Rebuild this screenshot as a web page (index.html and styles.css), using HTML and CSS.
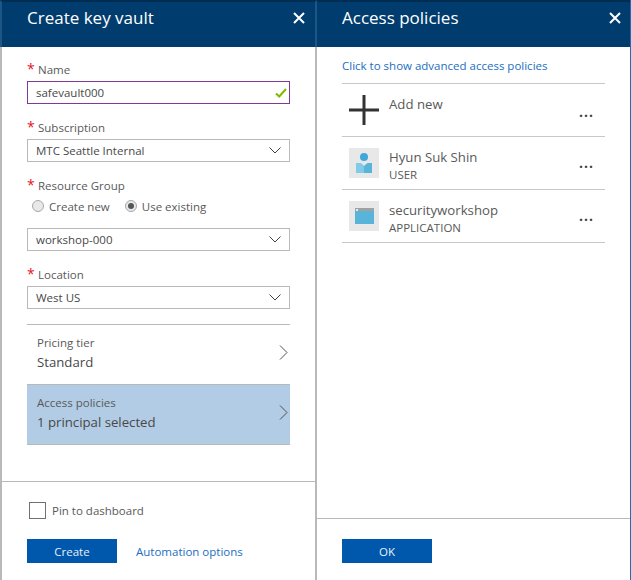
FILE: index.html
```html
<!DOCTYPE html>
<html lang="en">
<head>
    <meta charset="UTF-8">
    <meta name="viewport" content="width=device-width, initial-scale=1.0">
    <title>Create key vault</title>
    <link rel="stylesheet" href="styles.css">
</head>
<body>
    <div class="blades">
        <section class="blade blade-left">
            <header class="blade-header">
                <h2>Create key vault</h2>
                <svg class="close" width="12" height="12" viewBox="0 0 12 12"><path d="M1 1L11 11M11 1L1 11"/></svg>
            </header>
            <div class="blade-body form">
                <label class="field-label"><span class="req">*</span>Name</label>
                <div class="input input-active">
                    <span>safevault000</span>
                    <svg class="check" width="12" height="10" viewBox="0 0 12 10"><path d="M1 5.5L4.2 8.5L11 1"/></svg>
                </div>

                <label class="field-label"><span class="req">*</span>Subscription</label>
                <div class="input">
                    <span>MTC Seattle Internal</span>
                    <svg class="chevron" width="12" height="7" viewBox="0 0 12 7"><path d="M0.5 0.5L6 6L11.5 0.5"/></svg>
                </div>

                <label class="field-label"><span class="req">*</span>Resource Group</label>
                <div class="radios">
                    <span class="radio"><i class="dot"></i>Create new</span>
                    <span class="radio"><i class="dot dot-on"></i>Use existing</span>
                </div>
                <div class="input">
                    <span>workshop-000</span>
                    <svg class="chevron" width="12" height="7" viewBox="0 0 12 7"><path d="M0.5 0.5L6 6L11.5 0.5"/></svg>
                </div>

                <label class="field-label"><span class="req">*</span>Location</label>
                <div class="input">
                    <span>West US</span>
                    <svg class="chevron" width="12" height="7" viewBox="0 0 12 7"><path d="M0.5 0.5L6 6L11.5 0.5"/></svg>
                </div>

                <div class="selector">
                    <div>
                        <div class="selector-title">Pricing tier</div>
                        <div class="selector-value">Standard</div>
                    </div>
                    <svg class="arrow" width="9" height="15" viewBox="0 0 9 15"><path d="M1 0.5L8 7.5L1 14.5"/></svg>
                </div>
                <div class="selector selector-on">
                    <div>
                        <div class="selector-title">Access policies</div>
                        <div class="selector-value">1 principal selected</div>
                    </div>
                    <svg class="arrow" width="9" height="15" viewBox="0 0 9 15"><path d="M1 0.5L8 7.5L1 14.5"/></svg>
                </div>
            </div>
            <footer class="blade-footer">
                <div class="pin"><i class="checkbox"></i>Pin to dashboard</div>
                <div class="actions">
                    <button class="btn">Create</button>
                    <a class="link">Automation options</a>
                </div>
            </footer>
        </section>

        <section class="blade blade-right">
            <header class="blade-header">
                <h2>Access policies</h2>
                <svg class="close" width="12" height="12" viewBox="0 0 12 12"><path d="M1 1L11 11M11 1L1 11"/></svg>
            </header>
            <div class="blade-body list">
                <a class="link advanced">Click to show advanced access policies</a>
                <div class="row row-add">
                    <svg class="plus" width="30" height="30" viewBox="0 0 30 30"><path d="M15 0V30M0 15H30"/></svg>
                    <div class="row-name">Add new</div>
                    <div class="more">...</div>
                </div>
                <div class="row">
                    <div class="tile">
                        <svg width="16" height="20" viewBox="0 0 16 20">
                            <circle cx="8" cy="4" r="4" fill="#3fa8d8"/>
                            <path d="M0 10H4.5L8 13L11.5 10H16V20H0Z" fill="#59b4d9"/>
                            <path d="M0 10H4.5L8 13V20H0Z" fill="#7fcbe8"/>
                        </svg>
                    </div>
                    <div class="row-text">
                        <div class="row-name">Hyun Suk Shin</div>
                        <div class="row-type">USER</div>
                    </div>
                    <div class="more">...</div>
                </div>
                <div class="row">
                    <div class="tile">
                        <svg width="19" height="16" viewBox="0 0 19 16">
                            <rect width="19" height="16" fill="#59b4d9"/>
                            <rect width="19" height="3" fill="#a0a1a2"/>
                            <rect x="1" y="1" width="2" height="2" fill="#e8e8e8"/>
                        </svg>
                    </div>
                    <div class="row-text">
                        <div class="row-name">securityworkshop</div>
                        <div class="row-type">APPLICATION</div>
                    </div>
                    <div class="more">...</div>
                </div>
            </div>
            <footer class="blade-footer">
                <button class="btn">OK</button>
            </footer>
        </section>
    </div>
</body>
</html>
```

FILE: styles.css
```css
* {
    box-sizing: border-box;
}
html, body {
    height: 100%;
}
body {
    margin: 0;
    background-color: #fff;
    font-family: "Open Sans", "Liberation Sans", sans-serif;
    font-size: 11.5px;
    color: #595959;
    overflow: hidden;
}
.blades {
    display: flex;
    height: 580px;
}
.blade {
    display: flex;
    flex-direction: column;
    height: 100%;
}
.blade-left {
    width: 317px;
    border-left: 2px solid #b9b9b9;
    border-right: 2px solid #b9b9b9;
}
.blade-right {
    width: 314px;
    border-right: 1px solid #1f6db5;
}
.blade-header {
    display: flex;
    justify-content: space-between;
    align-items: center;
    height: 47px;
    padding: 0 10px 14px 25px;
    background-color: #003d6e;
    border-top: 2px solid #002e52;
    color: #fff;
}
.blade-left .blade-header {
    margin: 0 -2px;
    padding-left: 25px;
    border-left: 2px solid #1d5685;
    border-right: 2px solid #1d5685;
}
.blade-header h2 {
    margin: 0;
    font-size: 17px;
    font-weight: 400;
}
.close path {
    fill: none;
    stroke: #fff;
    stroke-width: 2;
}
.blade-body {
    flex: 1;
}
.form {
    padding: 14px 25px 0;
}
.field-label {
    display: block;
    height: 17px;
    margin-top: 15px;
    line-height: 17px;
}
.field-label:first-child {
    margin-top: 0;
}
.req {
    display: inline-block;
    width: 11px;
    color: #e81123;
    font-size: 14px;
    line-height: 12px;
}
.input {
    display: flex;
    justify-content: space-between;
    align-items: center;
    height: 23px;
    margin-top: 3px;
    padding: 0 8px;
    border: 1px solid #b9b9b9;
    color: #484848;
}
.input-active {
    padding-right: 2px;
    border-color: #7f3a97;
}
.check path {
    fill: none;
    stroke: #7fba00;
    stroke-width: 2;
}
.chevron path {
    fill: none;
    stroke: #404040;
    stroke-width: 1;
}
.radios {
    display: flex;
    gap: 15px;
    height: 20px;
    margin-top: 2px;
    padding-left: 5px;
}
.radio {
    display: flex;
    align-items: center;
    gap: 5px;
}
.dot {
    display: flex;
    align-items: center;
    justify-content: center;
    width: 12px;
    height: 12px;
    border: 1px solid #a8a8a8;
    border-radius: 50%;
    background-color: #e8e8e8;
}
.dot-on::after {
    content: "";
    width: 6px;
    height: 6px;
    border-radius: 50%;
    background-color: #555;
}
.radios + .input {
    margin-top: 12px;
}
.selector {
    display: flex;
    justify-content: space-between;
    align-items: center;
    height: 60px;
    padding: 0 2px 4px 10px;
    border-top: 1px solid #b9b9b9;
}
.input + .selector {
    margin-top: 15px;
}
.selector-on {
    background-color: #b2cce5;
    border-bottom: 1px solid #b9b9b9;
    height: 61px;
}
.selector-title {
    line-height: 18px;
}
.selector-value {
    font-size: 13.2px;
    line-height: 20px;
    color: #484848;
}
.arrow path {
    fill: none;
    stroke: #505050;
    stroke-width: 1;
}
.blade-footer {
    height: 99px;
    padding: 0 25px;
    border-top: 1px solid #b9b9b9;
}
.pin {
    display: flex;
    align-items: center;
    gap: 6px;
    margin: 20px 0 0 2px;
}
.checkbox {
    width: 17px;
    height: 17px;
    border: 1px solid #707070;
}
.actions {
    display: flex;
    align-items: center;
    gap: 19px;
    margin-top: 20px;
}
.btn {
    width: 90px;
    height: 24px;
    border: 0;
    background-color: #0058ad;
    color: #e8f0f8;
    font-family: inherit;
    font-size: 11.5px;
}
.link {
    color: #1b6ec2;
}
.list {
    padding: 11px 25px 0;
}
.blade-right .blade-header {
    padding-right: 9px;
}
.blade-right .blade-footer {
    height: 62px;
    padding-top: 20px;
}
.advanced {
    display: block;
    height: 25px;
    line-height: 16px;
}
.row {
    position: relative;
    display: flex;
    align-items: center;
    gap: 10px;
    height: 53px;
    padding-left: 7px;
    border-top: 1px solid #c8c8c8;
}
.row:last-child {
    border-bottom: 1px solid #c8c8c8;
    height: 54px;
}
.row-add {
    align-items: flex-start;
    padding-top: 11px;
}
.row-add .more {
    top: 18px;
}
.plus path {
    fill: none;
    stroke: #333;
    stroke-width: 3;
}
.tile {
    display: flex;
    align-items: center;
    justify-content: center;
    width: 30px;
    height: 30px;
    background-color: #e8e8e8;
}
.row-text {
    padding-top: 6px;
}
.row-name {
    font-size: 13.2px;
    line-height: 18px;
}
.row-type {
    line-height: 18px;
}
.more {
    position: absolute;
    right: 11px;
    top: 16px;
    font-size: 14px;
    font-weight: 700;
    letter-spacing: 1px;
    color: #404040;
}
```
